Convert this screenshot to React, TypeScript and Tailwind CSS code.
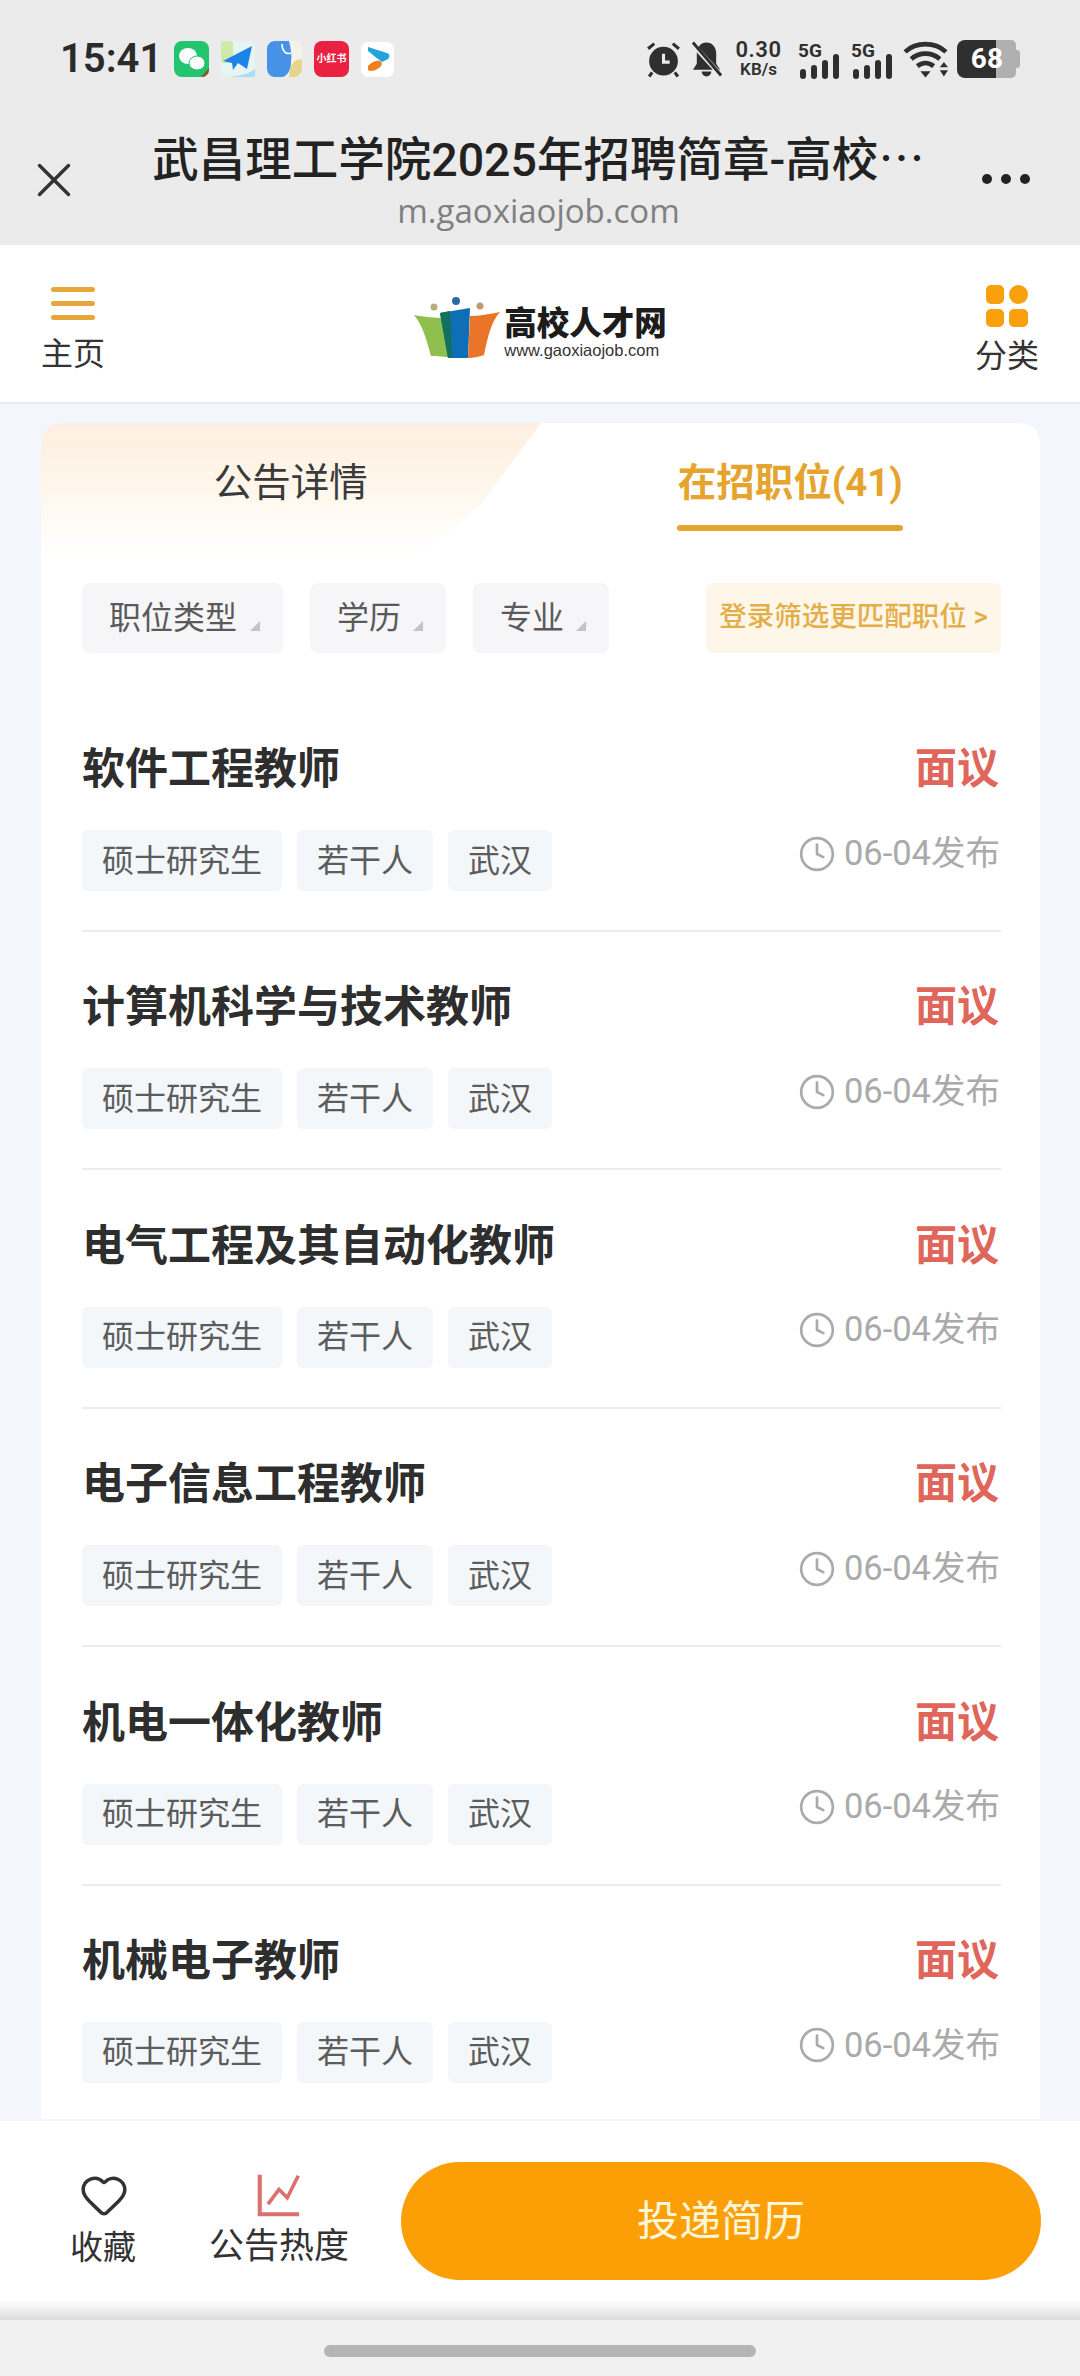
import { Clock, Heart, X } from 'lucide-react';

const jobs = [
  '软件工程教师',
  '计算机科学与技术教师',
  '电气工程及其自动化教师',
  '电子信息工程教师',
  '机电一体化教师',
  '机械电子教师',
];

const SignalBars = () => (
  <svg width="42" height="40" viewBox="0 -2 42 40" className="text-[#2f2f2f]">
    <text x="0" y="16" fontSize="19" fontWeight="700" fill="currentColor" fontFamily="Roboto">5G</text>
    <rect x="2" y="28" width="6" height="10" rx="3" fill="currentColor" />
    <rect x="13" y="24" width="6" height="14" rx="3" fill="currentColor" />
    <rect x="24" y="19" width="6" height="19" rx="3" fill="currentColor" />
    <rect x="35" y="13" width="6" height="25" rx="3" fill="currentColor" />
  </svg>
);

const StatusBar = () => (
  <div className="flex items-center justify-between h-[38px] pl-[60px] pr-[60px]">
    <div className="flex items-center">
      <span className="text-[40px] font-semibold leading-[38px] text-[#2b2b2b] w-[114px]">15:41</span>
      <div className="flex items-center gap-[12px]">
        <svg width="35" height="36" viewBox="0 0 35 36">
          <rect width="35" height="36" rx="8" fill="#22c46e" />
          <ellipse cx="14" cy="15" rx="9" ry="8" fill="#fff" />
          <ellipse cx="23" cy="22" rx="8" ry="7" fill="#fff" stroke="#22c46e" />
          <path d="M27 36l8-9v2a7 7 0 0 1-7 7z" fill="#8a5a2c" />
        </svg>
        <svg width="34" height="36" viewBox="0 0 34 36">
          <rect width="34" height="36" rx="7" fill="#e6f5f2" />
          <rect width="12" height="22" rx="3" fill="#cdeaa8" />
          <path d="M2 20L31 5 26 28 17 22 12 29 11 22z" fill="#1b84e6" />
          <path d="M10 36c8-2 16-2 24-8v8z" fill="#a9def2" />
        </svg>
        <svg width="35" height="36" viewBox="0 0 35 36">
          <rect width="35" height="36" rx="8" fill="#f4f3ea" />
          <path d="M22 36h5a8 8 0 0 0 8-8V19c-6-2-13 4-13 17z" fill="#e7d48d" />
          <path d="M8 0h14c2 8 3 14 2 21 0 8-4 15-9 15H8a8 8 0 0 1-8-8V8a8 8 0 0 1 8-8z" fill="#4692e6" />
          <path d="M15 3c0 7 4 11 9 9" fill="none" stroke="#fff" strokeWidth="1.5" />
        </svg>
        <div className="flex h-[36px] w-[35px] items-center justify-center rounded-[8px] bg-[#ea2140] text-[10px] font-bold text-white leading-none">小红书</div>
        <svg width="33" height="35" viewBox="0 0 33 35">
          <rect width="33" height="35" rx="7" fill="#fff" />
          <path d="M7 5l19 6c3 1 3 4 1 6l-6 3c-4-3-9-7-14-11z" fill="#21a3dd" />
          <path d="M7 24c3-4 9-6 12-5 3 2 2 5-1 7-4 3-9 4-11 2z" fill="#f08022" />
        </svg>
      </div>
    </div>
    <div className="flex items-center">
      <svg width="37" height="38" viewBox="0 0 36 36" className="mr-[9px]">
        <circle cx="18" cy="20" r="14" fill="#2f2f2f" />
        <path d="M18 13v8h6" fill="none" stroke="#ebebeb" strokeWidth="3" />
        <path d="M3 8l6-5M33 8l-6-5M7 31l-3 4M29 31l3 4" stroke="#2f2f2f" strokeWidth="3" />
      </svg>
      <svg width="31" height="38" viewBox="0 0 32 36" className="mr-[14px]">
        <path d="M16 1c6 0 10 5 10 11v11l4 6H2l4-6V12C6 6 10 1 16 1z" fill="#2f2f2f" />
        <path d="M11 31a5 5 0 0 0 10 0z" fill="#2f2f2f" />
        <path d="M1 2l30 33" stroke="#ebebeb" strokeWidth="5" />
        <path d="M2 1l29 34" stroke="#2f2f2f" strokeWidth="3" />
      </svg>
      <div className="flex w-[45px] flex-col items-center mr-[17px] text-[#2f2f2f] font-semibold">
        <span className="text-[22px] leading-[20px] tracking-[0.5px]">0.30</span>
        <span className="text-[17px] leading-[18px]">KB/s</span>
      </div>
      <div className="mr-[11px]"><SignalBars /></div>
      <div className="mr-[10px]"><SignalBars /></div>
      <svg width="45" height="38" viewBox="0 0 44 36" className="mr-[9px]">
        <path d="M2 11C13 1 31 1 42 11" fill="none" stroke="#2f2f2f" strokeWidth="4.5" />
        <path d="M8 18c8-7 20-7 28 0" fill="none" stroke="#2f2f2f" strokeWidth="4.5" />
        <path d="M14 25c5-4 11-4 16 0" fill="none" stroke="#2f2f2f" strokeWidth="4.5" />
        <path d="M17 30h10l-5 6zM36 26l4-5 4 5zM36 29h8l-4 6z" fill="#2f2f2f" />
      </svg>
      <div className="flex h-[38px] w-[63px]">
        <div className="relative z-10 flex w-[39px] items-center justify-end rounded-l-[8px] bg-[#2f2f2f] text-[28px] font-bold leading-none text-white">
          <span className="-mr-[7px]">68</span>
        </div>
        <div className="w-[20px] rounded-r-[5px] bg-[#b0b0b0]" />
        <div className="my-[10px] w-[4px] rounded-r-[3px] bg-[#b0b0b0]" />
      </div>
    </div>
  </div>
);

const Logo = () => (
  <div className="-mt-[10px] flex items-end">
    <svg width="88" height="62" viewBox="0 0 88 62">
      <circle cx="43" cy="5" r="4" fill="#2a6ca8" />
      <circle cx="21" cy="11" r="3.5" fill="#b9ad7e" />
      <circle cx="67" cy="10" r="3.5" fill="#c49a6c" />
      <path d="M1 19c10 2 21 3 29 3l5 39c-4 0-11-1-17-1C14 47 11 31 1 19z" fill="#8fbf4d" />
      <path d="M27 17l30-5-2 50H35z" fill="#0f6fb6" />
      <path d="M27 17l10-2 2 47h-4z" fill="#12715a" />
      <path d="M57 20c9 0 20-2 30-4-9 10-12 24-16 43-5 2-11 3-16 3z" fill="#ea7427" />
    </svg>
    <div className="ml-[3px] flex flex-col items-start">
      <span className="text-[32.5px] font-black leading-[36px] text-[#1c1c1c]">高校人才网</span>
      <span className="text-[16.5px] leading-[16px] text-[#333] [font-family:'Liberation_Sans',sans-serif]">www.gaoxiaojob.com</span>
    </div>
  </div>
);

const FilterChip = ({ label, width }: { label: string; width: string }) => (
  <div className={`relative flex h-[70px] items-center rounded-[8px] bg-[#f6f6f8] pl-[27px] text-[32px] text-[#5a5a5a] ${width}`}>
    {label}
    <svg width="10" height="10" viewBox="0 0 10 10" className="absolute right-[23px] bottom-[22px]">
      <path d="M10 0v10H0z" fill="#c4c4c8" />
    </svg>
  </div>
);

const Tag = ({ label }: { label: string }) => (
  <span className="flex h-[61px] items-center rounded-[6px] bg-[#f4f7fa] px-[20px] text-[32px] text-[#5c5c5c]">{label}</span>
);

const JobRow = ({ title }: { title: string }) => (
  <div className="h-[238.4px] border-b-2 border-[#ececee] first:h-[279px] flex flex-col justify-end pb-[39px]">
    <div className="flex items-center justify-between h-[50px]">
      <span className="text-[43px] font-bold text-[#2e2e2e] leading-[50px]">{title}</span>
      <span className="text-[42px] font-bold text-[#e0655a] leading-[50px] pr-[2px]">面议</span>
    </div>
    <div className="mt-[36px] flex items-start justify-between">
      <div className="flex gap-[15px]">
        <Tag label="硕士研究生" />
        <Tag label="若干人" />
        <Tag label="武汉" />
      </div>
      <div className="-mt-[7px] flex h-[61px] items-center text-[34.5px] text-[#aaaaaa] pr-[1px]">
        <Clock className="mr-[8px] h-[38px] w-[38px]" strokeWidth={1.7} />
        06-04发布
      </div>
    </div>
  </div>
);

export default function App() {
  return (
    <div className="flex h-[2376px] w-[1080px] flex-col overflow-hidden bg-[#f3f6fc] [font-family:Roboto,'Noto_Sans_CJK_SC',sans-serif]">
      {/* system + browser chrome */}
      <div className="h-[245px] shrink-0 bg-[#ebebeb] pt-[40px]">
        <StatusBar />
        <div className="mt-[50px] flex items-start justify-between pl-[25px] pr-[50px]">
          <X className="mt-[23px] h-[58px] w-[58px] text-[#333]" strokeWidth={1.4} />
          <div className="ml-[12px] flex flex-col items-center">
            <span className="text-[46.5px] font-medium leading-[56px] text-[#222]">
              武昌理工学院2025年招聘简章-高校<span className="font-normal [font-family:'Noto_Sans_CJK_SC',sans-serif]">⋯</span>
            </span>
            <span className="text-[33px] leading-[46px] text-[#808080] [font-family:'Open_Sans',sans-serif]">m.gaoxiaojob.com</span>
          </div>
          <div className="mt-[46px] flex gap-[9px]">
            <span className="h-[10px] w-[10px] rounded-full bg-[#222]" />
            <span className="h-[10px] w-[10px] rounded-full bg-[#222]" />
            <span className="h-[10px] w-[10px] rounded-full bg-[#222]" />
          </div>
        </div>
      </div>

      {/* site header */}
      <div className="flex h-[159px] shrink-0 items-center justify-between border-b-2 border-[#e9edf2] bg-white px-[41px] pt-[16px]">
        <div className="flex flex-col items-center">
          <div className="flex h-[33px] w-[44px] flex-col justify-between">
            <span className="h-[5px] rounded-full bg-[#e5a63c]" />
            <span className="h-[5px] rounded-full bg-[#e5a63c]" />
            <span className="h-[5px] rounded-full bg-[#e5a63c]" />
          </div>
          <span className="mt-[12px] text-[32px] leading-[44px] text-[#333]">主页</span>
        </div>
        <Logo />
        <div className="flex flex-col items-center">
          <div className="grid h-[42px] w-[42px] grid-cols-2 gap-[5px]">
            <span className="rounded-[5px] bg-[#fba00d]" />
            <span className="rounded-full bg-[#fba00d]" />
            <span className="rounded-[5px] bg-[#fba00d]" />
            <span className="rounded-[5px] bg-[#fba00d]" />
          </div>
          <span className="mt-[7px] text-[32px] leading-[44px] text-[#333]">分类</span>
        </div>
      </div>

      {/* announcement card */}
      <div className="min-h-0 flex-1 overflow-hidden pl-[41px] pr-[40px] pt-[19px]">
        <div className="relative rounded-t-[20px] bg-white pl-[41px] pr-[39px]">
          <div className="absolute left-0 top-0 h-[135px] w-[500px] rounded-tl-[20px] bg-linear-to-b from-[#fdeee0] via-[#fff7ec] to-white [clip-path:polygon(0_0,100%_0,88%_60%,75%_100%,0_100%)]" />
          <div className="relative -ml-[41px] -mr-[39px] grid grid-cols-2">
            <div className="flex justify-center pt-[36px]">
              <span className="text-[38.5px] leading-[48px] text-[#3a3a3a]">公告详情</span>
            </div>
            <div className="flex flex-col items-center pt-[36px]">
              <span className="text-[38.5px] font-bold leading-[48px] text-[#e5a42d]">在招职位(41)</span>
              <span className="mt-[18px] h-[6px] w-[226px] rounded-full bg-[#e5a42d]" />
            </div>
          </div>
          <div className="relative mt-[52px] flex items-center">
            <div className="flex gap-[27px]">
              <FilterChip label="职位类型" width="w-[201px]" />
              <FilterChip label="学历" width="w-[136px]" />
              <FilterChip label="专业" width="w-[136px]" />
            </div>
            <div className="ml-auto flex h-[70px] w-[295px] items-center justify-center rounded-[6px] bg-[#fff6ea] pb-[3px] text-[27.5px] font-medium text-[#e4ae47]">
              登录筛选更匹配职位 &gt;
            </div>
          </div>
          <div className="flex flex-col">
            {jobs.map((job) => (
              <JobRow key={job} title={job} />
            ))}
          </div>
        </div>
      </div>

      {/* bottom action bar */}
      <div className="shrink-0 border-t-2 border-[#f5f5f5] bg-white">
        <div className="flex h-[179px] items-center pl-[70px] pr-[39px] pt-[20px]">
          <div className="flex w-[141px] flex-col items-start">
            <Heart className="ml-[9px] h-[50px] w-[50px] text-[#333]" strokeWidth={1.7} />
            <span className="mt-[4px] text-[33px] leading-[48px] text-[#333]">收藏</span>
          </div>
          <div className="-ml-[27px] mr-[27px] flex w-[190px] flex-col items-center">
            <svg width="44" height="46" viewBox="0 0 48 48" className="mt-[2px] text-[#d9726f]">
              <path d="M3 2v43h43" fill="none" stroke="currentColor" strokeWidth="4.5" />
              <path d="M12 34l12-16 9 9 12-24" fill="none" stroke="currentColor" strokeWidth="4" />
            </svg>
            <span className="mt-[5px] text-[35px] leading-[48px] text-[#333]">公告热度</span>
          </div>
          <div className="ml-auto mt-[1px] flex h-[118px] w-[640px] items-center justify-center rounded-full bg-[#fc9f06] text-[42px] text-[#fff6da]">
            投递简历
          </div>
        </div>
        <div className="h-[20px] bg-linear-to-b from-white to-[#dcdcdc]" />
      </div>

      {/* gesture bar */}
      <div className="flex h-[56px] shrink-0 items-start justify-center bg-[#f1f1f1] pt-[25px]">
        <span className="h-[12px] w-[432px] rounded-full bg-[#b5b5b5]" />
      </div>
    </div>
  );
}
